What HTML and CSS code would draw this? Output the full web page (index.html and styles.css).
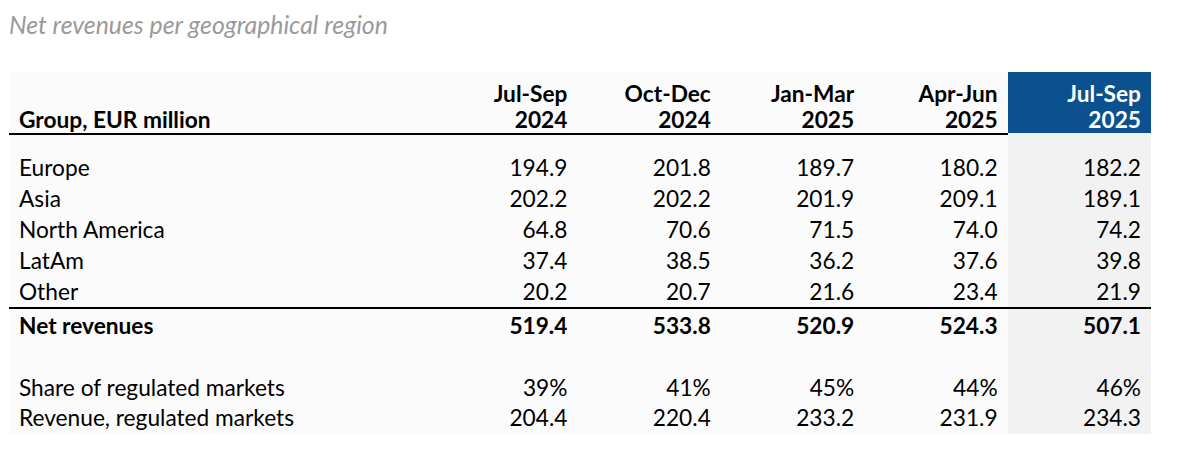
FILE: index.html
```html
<!DOCTYPE html>
<html lang="en">
<head>
<meta charset="utf-8">
<title>Net revenues per geographical region</title>
<link rel="stylesheet" href="styles.css">
</head>
<body>
<div class="page">
  <h1 class="title">Net revenues per geographical region</h1>
  <table class="fin">
    <colgroup>
      <col class="c-label">
      <col class="c-num">
      <col class="c-num">
      <col class="c-num">
      <col class="c-num">
      <col class="c-num">
    </colgroup>
    <thead>
      <tr class="head">
        <th class="label">Group, EUR million</th>
        <th>Jul-Sep<br>2024</th>
        <th>Oct-Dec<br>2024</th>
        <th>Jan-Mar<br>2025</th>
        <th>Apr-Jun<br>2025</th>
        <th class="hl">Jul-Sep<br>2025</th>
      </tr>
    </thead>
    <tbody>
      <tr class="gap g1"><td></td><td></td><td></td><td></td><td></td><td class="hl"></td></tr>
      <tr class="row"><td class="label">Europe</td><td>194.9</td><td>201.8</td><td>189.7</td><td>180.2</td><td class="hl">182.2</td></tr>
      <tr class="row"><td class="label">Asia</td><td>202.2</td><td>202.2</td><td>201.9</td><td>209.1</td><td class="hl">189.1</td></tr>
      <tr class="row"><td class="label">North America</td><td>64.8</td><td>70.6</td><td>71.5</td><td>74.0</td><td class="hl">74.2</td></tr>
      <tr class="row"><td class="label">LatAm</td><td>37.4</td><td>38.5</td><td>36.2</td><td>37.6</td><td class="hl">39.8</td></tr>
      <tr class="row last"><td class="label">Other</td><td>20.2</td><td>20.7</td><td>21.6</td><td>23.4</td><td class="hl">21.9</td></tr>
      <tr class="row total"><td class="label">Net revenues</td><td>519.4</td><td>533.8</td><td>520.9</td><td>524.3</td><td class="hl">507.1</td></tr>
      <tr class="gap g2"><td></td><td></td><td></td><td></td><td></td><td class="hl"></td></tr>
      <tr class="row sub"><td class="label">Share of regulated markets</td><td>39%</td><td>41%</td><td>45%</td><td>44%</td><td class="hl">46%</td></tr>
      <tr class="row sub end"><td class="label">Revenue, regulated markets</td><td>204.4</td><td>220.4</td><td>233.2</td><td>231.9</td><td class="hl">234.3</td></tr>
    </tbody>
  </table>
</div>
</body>
</html>
```
FILE: styles.css
```css
html, body {
  margin: 0;
  padding: 0;
  background: #ffffff;
}

.page {
  padding: 12px 0 0 9px;
  font-family: Lato, "Liberation Sans", sans-serif;
  color: #000;
}

.title {
  margin: 0;
  font-size: 24.8px;
  line-height: 26px;
  font-weight: 400;
  font-style: italic;
  color: #9a9a9a;
}

.fin {
  margin-top: 34px;
  border-collapse: separate;
  border-spacing: 0;
  table-layout: fixed;
  width: 1142px;
  background: #fbfbfb;
  font-size: 22.7px;
}

.c-label { width: 425px; }
.c-num { width: 143.4px; }

.fin th,
.fin td {
  padding: 0 10px 0 0;
  text-align: right;
  white-space: nowrap;
}

.fin .label {
  text-align: left;
  padding-left: 10px;
}

.head th {
  font-weight: 700;
  line-height: 26px;
  padding-top: 9px;
  vertical-align: bottom;
  border-bottom: 2px solid #000;
}

.head th.hl {
  background: #0b5190;
  color: #fff;
  border-bottom-color: #f2f2f2;
}

.hl {
  background: #f2f2f2;
}

.gap td { padding: 0; }
.g1 td { height: 17px; }
.g2 td { height: 32px; }

.row td {
  line-height: 31px;
}

.last td {
  border-bottom: 2px solid #000;
}

.total td {
  font-weight: 700;
  padding-top: 1px;
}

.sub td {
  line-height: 30px;
}

.end td {
  padding-bottom: 1px;
}
```
